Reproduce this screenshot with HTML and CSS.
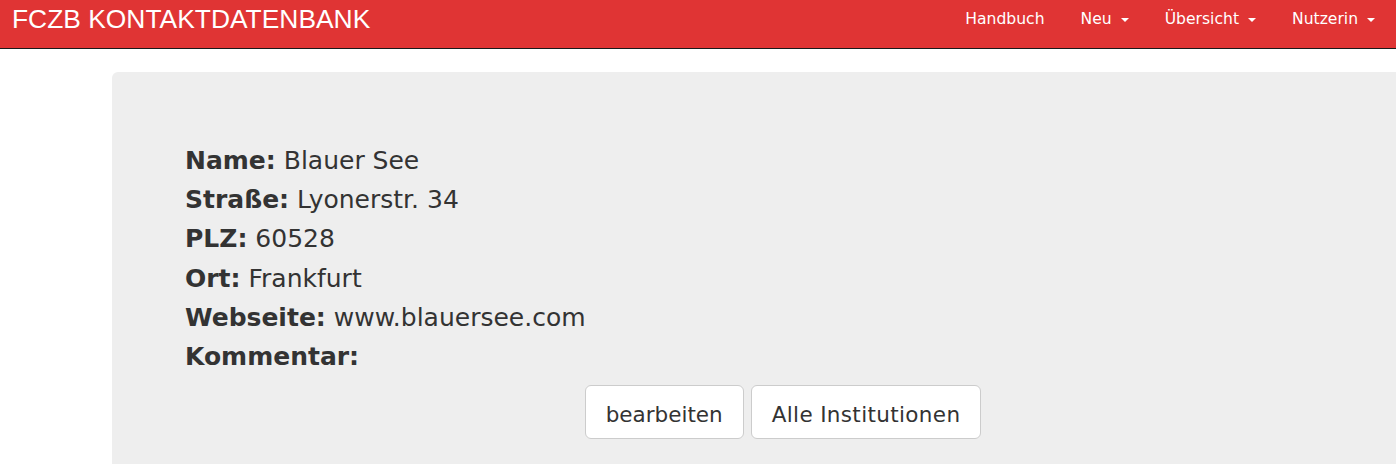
FILE: index.html
```html
<!DOCTYPE html>
<html lang="de">
<head>
<meta charset="utf-8">
<title>FCZB Kontaktdatenbank</title>
<link rel="stylesheet" href="styles.css">
</head>
<body>
<nav class="navbar">
  <a class="brand" href="#">FCZB KONTAKTDATENBANK</a>
  <ul class="nav">
    <li><a href="#">Handbuch</a></li>
    <li><a href="#">Neu <span class="caret"></span></a></li>
    <li><a href="#">Übersicht <span class="caret"></span></a></li>
    <li><a href="#">Nutzerin <span class="caret"></span></a></li>
  </ul>
</nav>
<main class="jumbotron">
  <div class="details">
    <div class="row"><b>Name:</b> Blauer See</div>
    <div class="row"><b>Straße:</b> Lyonerstr. 34</div>
    <div class="row"><b>PLZ:</b> 60528</div>
    <div class="row"><b>Ort:</b> Frankfurt</div>
    <div class="row"><b>Webseite:</b> www.blauersee.com</div>
    <div class="row"><b>Kommentar:</b> </div>
  </div>
  <div class="actions">
    <a class="btn" href="#">bearbeiten</a>
    <a class="btn btn-wide" href="#">Alle Institutionen</a>
  </div>
</main>
</body>
</html>
```
FILE: styles.css
```css
html, body {
  margin: 0;
  padding: 0;
  overflow: hidden;
  background: #fff;
}
body {
  font-family: "DejaVu Sans", Verdana, sans-serif;
  color: #333;
  width: 1396px;
  height: 464px;
}
.navbar {
  display: flex;
  justify-content: space-between;
  align-items: flex-start;
  height: 48px;
  background: #e03434;
  border-bottom: 1px solid #1a1a1a;
}
.brand {
  font-family: "Liberation Sans", Arial, sans-serif;
  font-size: 26.4px;
  line-height: 30px;
  color: #fff;
  text-decoration: none;
  padding: 4px 0 0 12px;
}
.nav {
  display: flex;
  list-style: none;
  margin: 0 3px 0 0;
  padding: 0;
}
.nav a {
  display: block;
  color: #fff;
  text-decoration: none;
  font-size: 15.6px;
  line-height: 20px;
  padding: 9px 18px 0;
}
.caret {
  display: inline-block;
  width: 0;
  height: 0;
  margin-left: 4px;
  vertical-align: middle;
  border-top: 4px solid #fff;
  border-left: 4px solid transparent;
  border-right: 4px solid transparent;
}
.jumbotron {
  margin: 23px 0 0 112px;
  width: 1342px;
  height: 392px;
  background: #eeeeee;
  border-radius: 6px 6px 0 0;
  padding: 69px 0 0 0;
  box-sizing: border-box;
}
.details {
  padding-left: 73px;
  font-size: 25px;
  line-height: 39.2px;
}
.details b {
  font-weight: bold;
}
.actions {
  display: flex;
  justify-content: center;
  gap: 7px;
  margin-top: 9px;
}
.btn {
  display: block;
  font-size: 21.5px;
  line-height: 29px;
  padding: 14px 20px 9px;
  color: #333;
  background: #fff;
  border: 1px solid #cccccc;
  border-radius: 6px;
  text-decoration: none;
}
.btn-wide {
  letter-spacing: 0.35px;
}
```
